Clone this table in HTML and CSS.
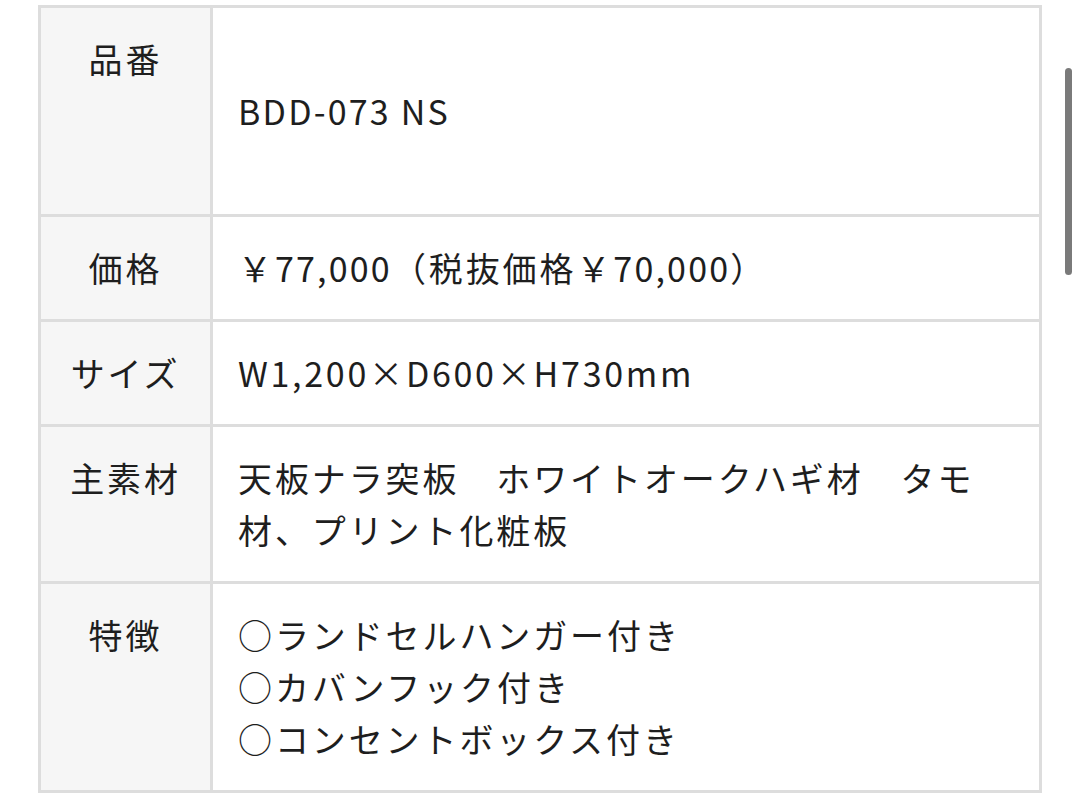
FILE: index.html
```html
<!DOCTYPE html>
<html lang="ja">
<head>
<meta charset="utf-8">
<link rel="stylesheet" href="styles.css">
</head>
<body>
<div class="spec">
  <div class="label">品番</div>
  <div class="value"><span class="faint">&nbsp;</span><br><span class="latin">BDD-073 NS</span><br><span class="faint">&nbsp;</span></div>

  <div class="label">価格</div>
  <div class="value">￥<span class="latin">77,000</span>（税抜価格￥<span class="latin">70,000</span>）</div>

  <div class="label">サイズ</div>
  <div class="value size"><span class="latin">W1,200</span>×<span class="latin">D600</span>×<span class="latin">H730mm</span></div>

  <div class="label">主素材</div>
  <div class="value">天板ナラ突板　ホワイトオークハギ材　タモ材、プリント化粧板</div>

  <div class="label">特徴</div>
  <div class="value">○ランドセルハンガー付き<br>○カバンフック付き<br>○コンセントボックス付き</div>
</div>
<div class="scrollbar"></div>
</body>
</html>
```

FILE: styles.css
```css
html, body {
  margin: 0;
  padding: 0;
  background: #ffffff;
}

body {
  font-family: "Noto Sans CJK JP", "Noto Sans", sans-serif;
  color: #1e1e1e;
  overflow: hidden;
}

.spec {
  box-sizing: border-box;
  width: 1004px;
  margin: 5px 0 0 38px;
  display: grid;
  grid-template-columns: 169px 1fr;
  gap: 3px;
  padding: 3px;
  background: #dddddd;
}

.label,
.value {
  font-size: 34px;
  letter-spacing: 2.9px;
  line-height: 52px;
  padding: 25px 0;
}

.label {
  background: #f6f6f6;
  text-align: center;
}

.value {
  background: #ffffff;
  padding-left: 25px;
  padding-right: 40px;
}

.latin {
  letter-spacing: 2.2px;
}

.size .latin {
  letter-spacing: 2.7px;
}

.faint {
  color: #f7f7f7;
}

.scrollbar {
  position: fixed;
  left: 1065px;
  top: 68px;
  width: 7px;
  height: 207px;
  border-radius: 4px;
  background: #7a7a7a;
}
```
